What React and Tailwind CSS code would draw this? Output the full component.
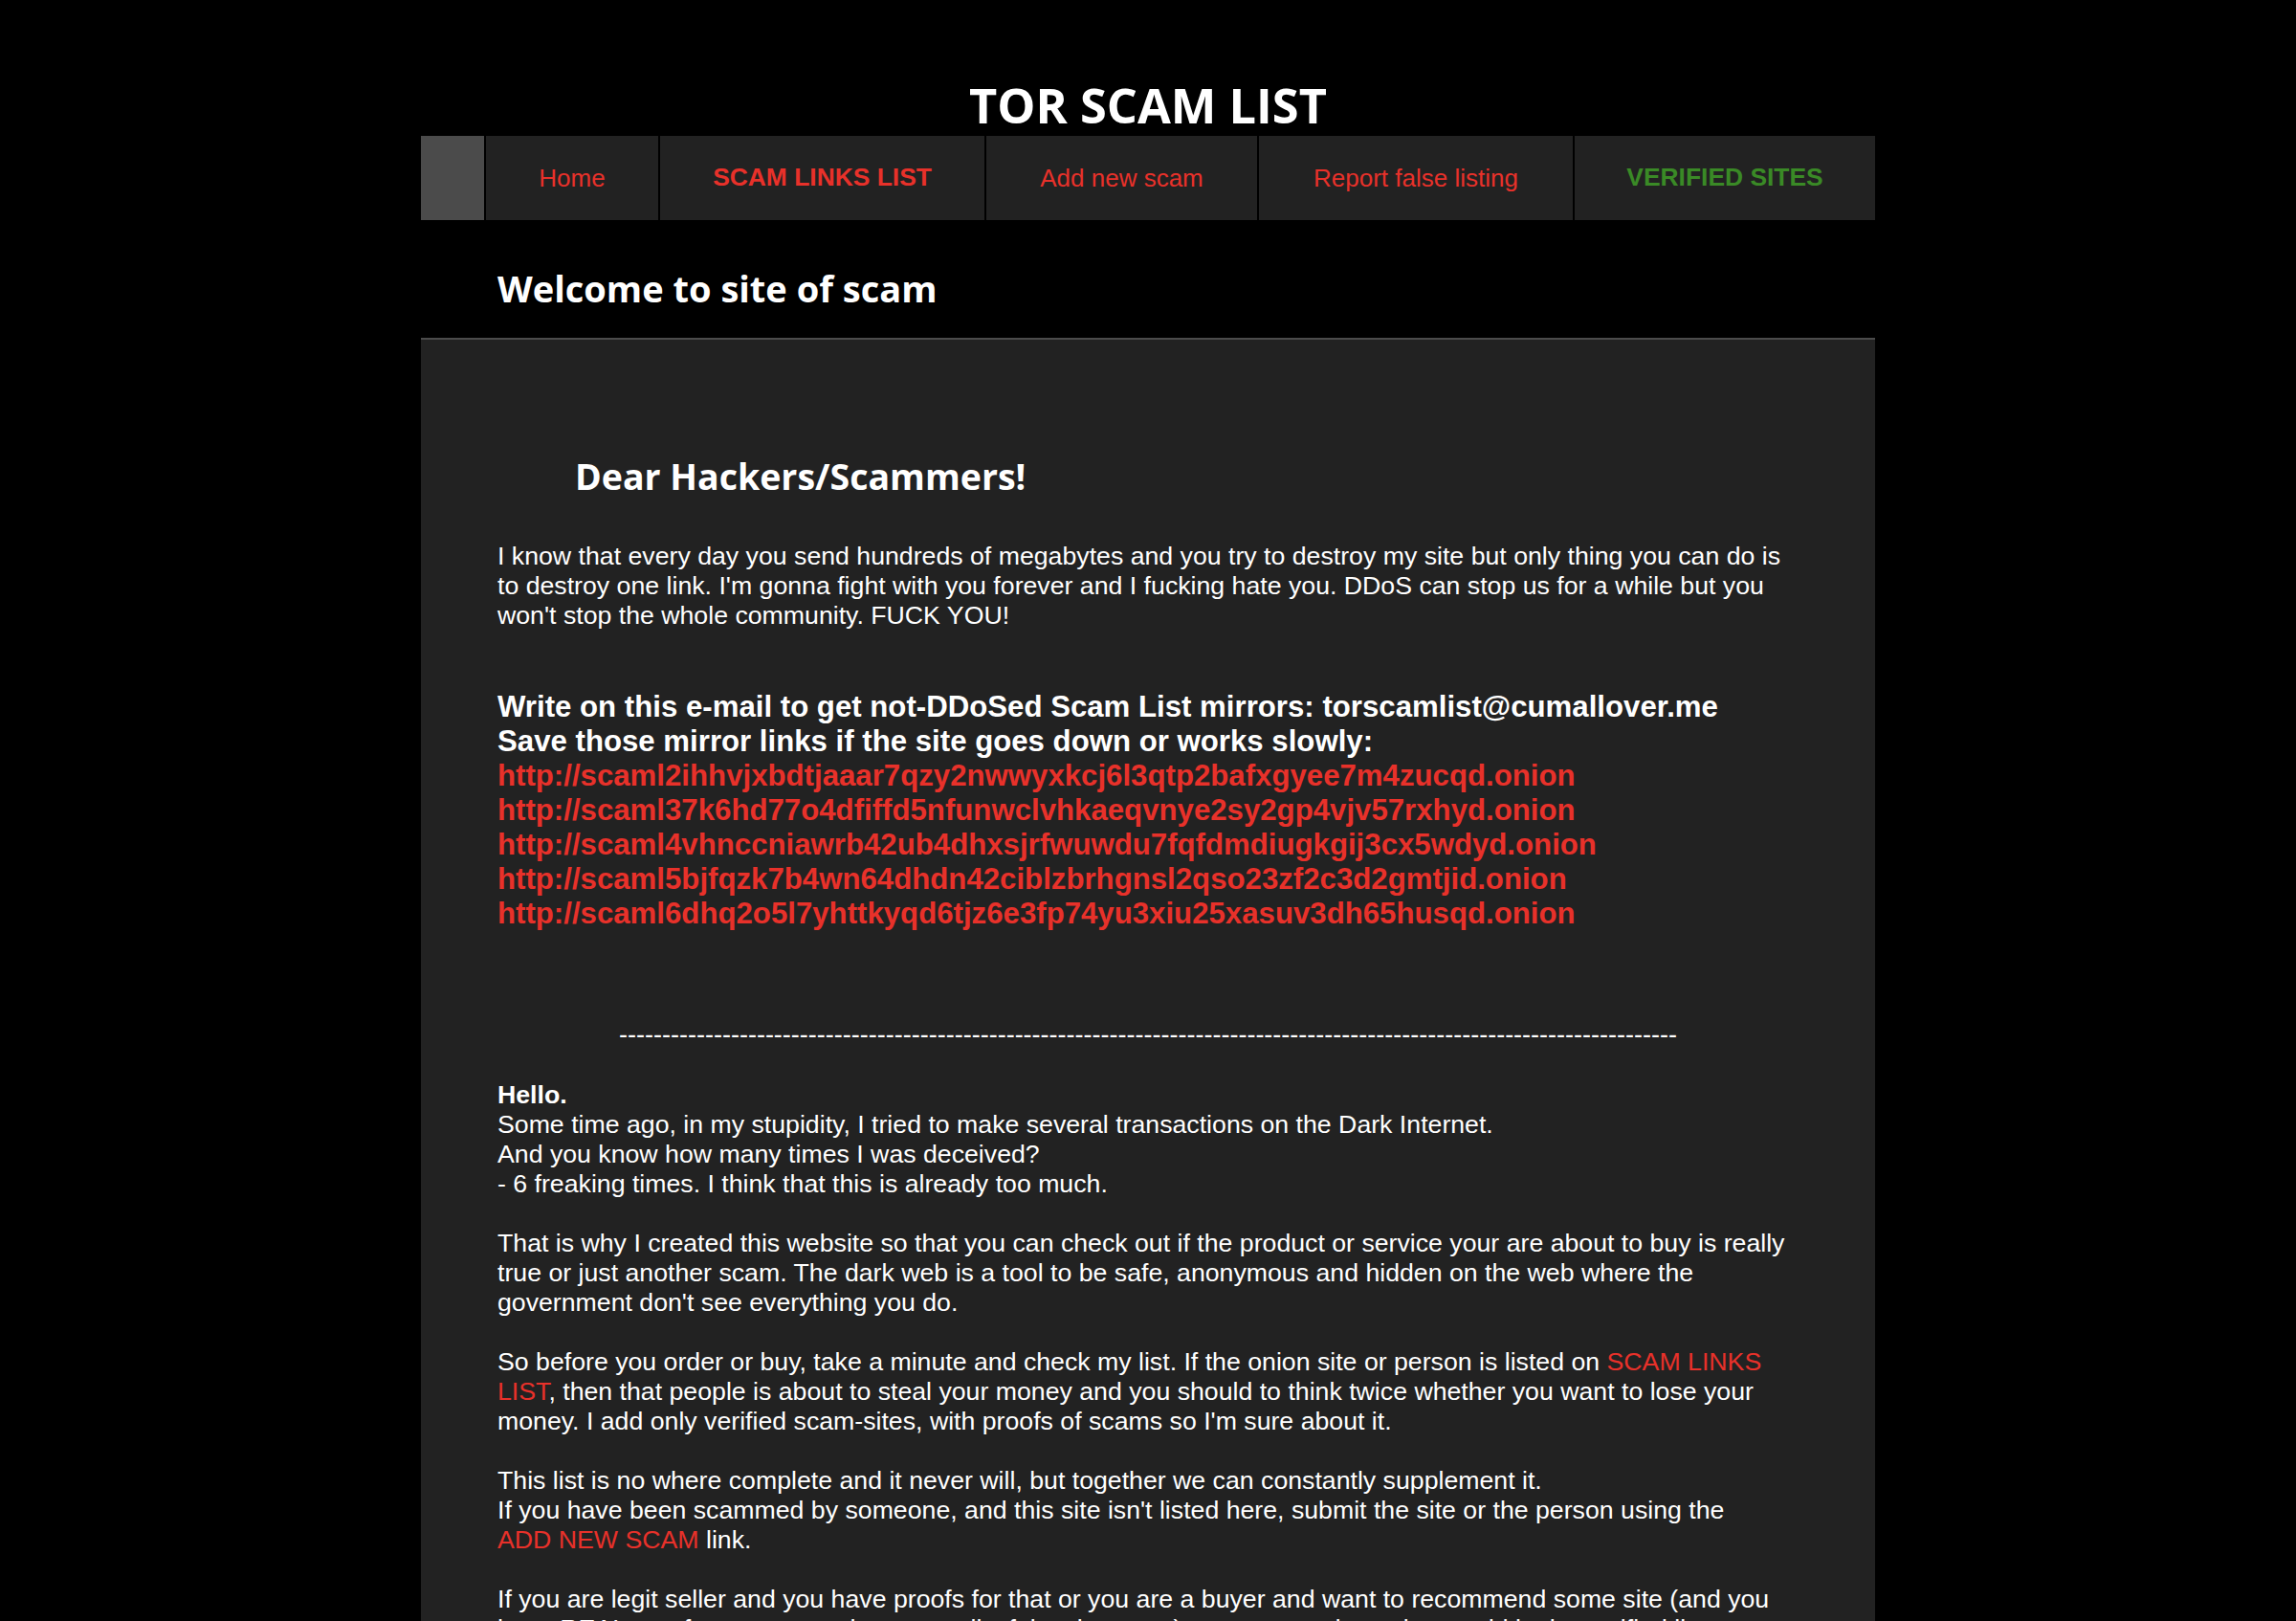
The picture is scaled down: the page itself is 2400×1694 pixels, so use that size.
import React from 'react';

const navItems = [
  { label: 'Home', w: 'w-[182px]', cls: 'text-[26px] text-[#e8312a]' },
  { label: 'SCAM LINKS LIST', w: 'w-[341px]', cls: 'text-[26.4px] text-[#e8312a] font-bold' },
  { label: 'Add new scam', w: 'w-[285px]', cls: 'text-[26px] text-[#e8312a]' },
  { label: 'Report false listing', w: 'w-[330px]', cls: 'text-[26px] text-[#e8312a]' },
  { label: 'VERIFIED SITES', w: 'flex-1', cls: 'text-[26.4px] text-[#3a8a26] font-bold' },
];

const mirrors = [
  'http://scaml2ihhvjxbdtjaaar7qzy2nwwyxkcj6l3qtp2bafxgyee7m4zucqd.onion',
  'http://scaml37k6hd77o4dfiffd5nfunwclvhkaeqvnye2sy2gp4vjv57rxhyd.onion',
  'http://scaml4vhnccniawrb42ub4dhxsjrfwuwdu7fqfdmdiugkgij3cx5wdyd.onion',
  'http://scaml5bjfqzk7b4wn64dhdn42ciblzbrhgnsl2qso23zf2c3d2gmtjid.onion',
  'http://scaml6dhq2o5l7yhttkyqd6tjz6e3fp74yu3xiu25xasuv3dh65husqd.onion',
];

export default function App() {
  return (
    <div className="min-h-screen bg-black font-['Liberation_Sans',Arial,sans-serif] text-white">
      <div className="mx-auto w-[1520px]">
        <h1 className="h-[142px] pt-[78px] text-center font-['Open_Sans',sans-serif] text-[50.5px] font-bold leading-[64px]">
          TOR SCAM LIST
        </h1>

        {/* nav */}
        <nav className="flex h-[88px] bg-[#222]">
          <div className="w-[66px] bg-[#4b4b4b]" />
          {navItems.map(item => (
            <a
              key={item.label}
              href="#"
              className={`flex items-center justify-center border-l-2 border-black ${item.w} ${item.cls}`}
            >
              {item.label}
            </a>
          ))}
        </nav>

        <div className="flex h-[123px] items-center pl-[80px] pt-[20px]">
          <h2 className="font-['Open_Sans',sans-serif] text-[38px] font-bold">Welcome to site of scam</h2>
        </div>

        <div className="border-t-2 border-[#4b4b4b] bg-[#222] pl-[80px] pr-[40px] pt-[115px] pb-[80px]">
          <h3 className="pl-[81px] font-['Open_Sans',sans-serif] text-[37.5px] font-bold leading-[56px]">
            Dear Hackers/Scammers!
          </h3>

          <p className="mt-[40px] text-[26.7px] leading-[31px]">
            I know that every day you send hundreds of megabytes and you try to destroy my site but only thing you can do is
            <br />
            to destroy one link. I'm gonna fight with you forever and I fucking hate you. DDoS can stop us for a while but you
            <br />
            won't stop the whole community. FUCK YOU!
          </p>

          <div className="mt-[62px] text-[31.2px] font-bold leading-[36px]">
            <div>Write on this e-mail to get not-DDoSed Scam List mirrors: torscamlist@cumallover.me</div>
            <div>Save those mirror links if the site goes down or works slowly:</div>
            {mirrors.map(m => (
              <div key={m} className="text-[#e8312a]">{m}</div>
            ))}
          </div>

          <div className="mt-[93px] pr-[40px] text-center text-[27px] leading-[31px]">
            {'-'.repeat(123)}
          </div>

          <div className="mt-[31.5px] text-[26.7px] leading-[31px]">
            <p>
              <b>Hello.</b>
              <br />
              Some time ago, in my stupidity, I tried to make several transactions on the Dark Internet.
              <br />
              And you know how many times I was deceived?
              <br />- 6 freaking times. I think that this is already too much.
            </p>
            <p className="mt-[31px]">
              That is why I created this website so that you can check out if the product or service your are about to buy is really
              <br />
              true or just another scam. The dark web is a tool to be safe, anonymous and hidden on the web where the
              <br />
              government don't see everything you do.
            </p>
            <p className="mt-[31px]">
              So before you order or buy, take a minute and check my list. If the onion site or person is listed on{' '}
              <a href="#" className="text-[#e8312a]">
                SCAM LINKS
                <br />
                LIST
              </a>
              , then that people is about to steal your money and you should to think twice whether you want to lose your
              <br />
              money. I add only verified scam-sites, with proofs of scams so I'm sure about it.
            </p>
            <p className="mt-[31px]">
              This list is no where complete and it never will, but together we can constantly supplement it.
              <br />
              If you have been scammed by someone, and this site isn't listed here, submit the site or the person using the
              <br />
              <a href="#" className="text-[#e8312a]">ADD NEW SCAM</a> link.
            </p>
            <p className="mt-[31px]">
              If you are legit seller and you have proofs for that or you are a buyer and want to recommend some site (and you
              <br />
              have REAL proofs, not screenshots, e-mails, fake chats etc.) you can send me site to add in the verified list.
            </p>
          </div>
        </div>
      </div>
    </div>
  );
}
